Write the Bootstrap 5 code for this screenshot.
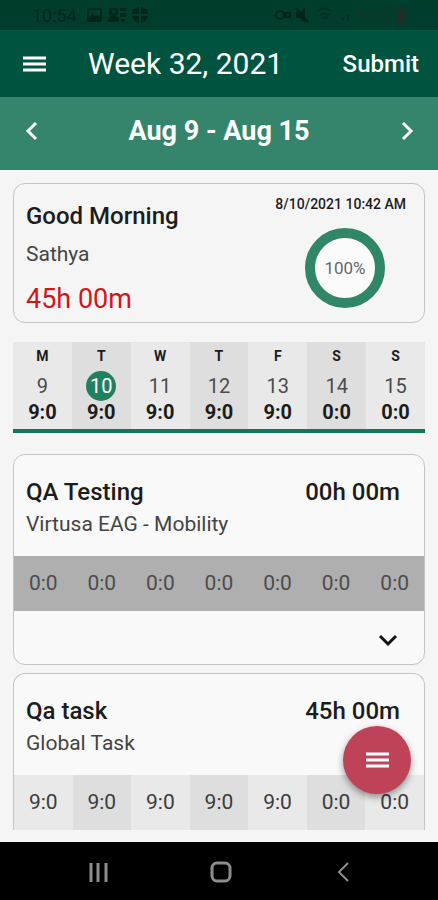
<!DOCTYPE html>
<html lang="en">
<head>
<meta charset="utf-8">
<meta name="viewport" content="width=device-width, initial-scale=1">
<title>Timesheet – Week 32, 2021</title>
<link href="https://cdn.jsdelivr.net/npm/bootstrap@5.3.0/dist/css/bootstrap.min.css" rel="stylesheet">
<style>
  body { font-family: Roboto, "Liberation Sans", sans-serif; background: #f5f5f5; color: #1c1c1c; }
  .status-bar { background: #003d2d; color: #00251b; height: 30px; padding: 0 32px; font-size: 18px; }
  .app-bar { background: #00543f; height: 67px; padding: 0 19px 0 23px; }
  .app-title { font-size: 30px; line-height: 34px; margin-left: 42px; }
  .submit-btn { font-size: 24px; line-height: 28px; font-weight: 500; }
  .week-bar { background: #35846c; height: 73px; padding: 0 24px 6px; }
  .week-label { font-size: 27px; line-height: 32px; font-weight: 700; }
  .content { padding: 13px 13px 0; }
  .panel { border: 1px solid #c4c4c4; border-radius: 12px; overflow: hidden; }
  .greeting { height: 140px; padding: 12px 18px 7px 12px; margin-bottom: 19px; }
  .heading { font-size: 24px; line-height: 28px; font-weight: 500; }
  .greeting .heading { line-height: 32px; }
  .detail { font-size: 21px; line-height: 28px; color: #444; }
  .total { font-size: 27px; line-height: 32px; color: #d4151b; }
  .stamp { font-size: 14px; line-height: 16px; font-weight: 500; }
  .ring { margin-right: 21px; }
  .days { table-layout: fixed; width: 100%; text-align: center; }
  .days th, .days td { padding: 0; background: #e9e9e9; }
  .days th:nth-child(even), .days td:nth-child(even) { background: #dedede; }
  .week-days { border-bottom: 4px solid #12775a; margin-bottom: 21px; }
  .week-days th { font-size: 14px; line-height: 28px; font-weight: 700; }
  .week-days .date { font-size: 20px; line-height: 32px; color: #4c4c4c; }
  .week-days .hours { font-size: 20px; line-height: 20px; font-weight: 700; padding-bottom: 7px; }
  .today { width: 30px; height: 30px; background: #23805f; }
  .task { background: #f9f9f9; margin-bottom: 8px; }
  .task-head { height: 101px; padding: 23px 24px 0 12px; }
  .task-hours td { font-size: 21px; line-height: 55px; color: #3c3c3c; }
  .task-hours.locked td { background: #afafaf; color: #4c4c4c; }
  .task-foot { height: 53px; padding: 4px 24px 0; }
  .task-open { border-bottom: 0; border-radius: 12px 12px 0 0; margin-bottom: 12px; }
  .fab { width: 68px; height: 68px; right: 27px; bottom: 106px; background: #be4258; box-shadow: 0 3px 7px rgba(0,0,0,.4); }
  .nav-keys { height: 58px; padding: 2px 80px 0 84px; }
</style>
<script src="https://cdn.jsdelivr.net/npm/bootstrap@5.3.0/dist/js/bootstrap.bundle.min.js"></script>
</head>
<body class="min-vh-100 d-flex flex-column">

<div class="status-bar d-flex align-items-center">
  <span>10:54</span>
  <svg class="ms-2" width="66" height="18" viewBox="0 0 66 18" aria-hidden="true">
    <path fill="currentColor" fill-rule="evenodd" d="M4 2h11a2 2 0 0 1 2 2v10a2 2 0 0 1-2 2H4a2 2 0 0 1-2-2V4a2 2 0 0 1 2-2zM4 4v8l4-5 3 4 2-2 2 3V4z"/>
    <path fill="currentColor" fill-rule="evenodd" d="M24 2h9v7h-3l4 3v4H23v-4l4-3h-3zM27 4v3h3V4zM35 2h6v3h-6zM35 7h6v4h-6zM36 13h4v3h-4z"/>
    <path fill="currentColor" d="M48 3q4 0 6-2v7h-7q0-3 1-5zM56 1q3 2 6 2l1 5h-7zM47 10h7v7q-6-2-7-7zM56 10h7q-1 5-7 7z"/>
  </svg>
  <svg class="ms-auto" width="132" height="18" viewBox="0 0 132 18" fill="none" stroke="currentColor" stroke-width="2" aria-hidden="true">
    <circle cx="6" cy="9" r="4"/><path d="M10 7h7M10 11h4M16 8v4"/><circle cx="14" cy="9" r="2"/>
    <path fill="currentColor" stroke="none" d="M22 6h4l5-5v16l-5-5h-4z"/><path d="M22 2l12 14"/>
    <g opacity=".6"><path d="M44 5q7-5 13 0M46 9q5-3 9 0M49 12q2-1 4 0"/><path d="M69 15v-3M74 15V9"/></g>
    <path stroke="#173229" opacity=".6" d="M85 4h6M85 4v5h6v5h-6M103 4h-6v5h6v5h-6M108 15l7-12"/><circle cx="109" cy="5" r="1" stroke="#173229" opacity=".6"/><circle cx="114" cy="13" r="1" stroke="#173229" opacity=".6"/>
    <path fill="#2c2a22" stroke="none" opacity=".7" d="M124 3h2V1h4v2h2v14h-8z"/>
  </svg>
</div>

<header class="app-bar d-flex align-items-center text-white">
  <button class="btn p-0 border-0 text-white d-flex" type="button" aria-label="Menu">
    <svg width="23" height="18" viewBox="0 0 23 18" fill="none" stroke="currentColor" stroke-width="3"><path d="M0 3h23M0 9h23M0 15h23"/></svg>
  </button>
  <h1 class="app-title mb-0 fw-normal">Week 32, 2021</h1>
  <button class="submit-btn btn p-0 border-0 text-white ms-auto" type="button">Submit</button>
</header>

<nav class="week-bar d-flex align-items-center justify-content-between text-white" aria-label="Week">
  <button class="btn p-0 border-0 text-white d-flex" type="button" aria-label="Previous week">
    <svg width="14" height="20" viewBox="0 0 14 20" fill="none" stroke="currentColor" stroke-width="3"><path d="M12 2L4 10l8 8"/></svg>
  </button>
  <h2 class="week-label mb-0">Aug 9 - Aug 15</h2>
  <button class="btn p-0 border-0 text-white d-flex" type="button" aria-label="Next week">
    <svg width="14" height="20" viewBox="0 0 14 20" fill="none" stroke="currentColor" stroke-width="3"><path d="M3 2l8 8-8 8"/></svg>
  </button>
</nav>

<main class="content flex-grow-1">
  <section class="panel greeting d-flex justify-content-between">
    <div class="d-flex flex-column">
      <h3 class="heading mb-0 mt-1">Good Morning</h3>
      <div class="detail mt-2">Sathya</div>
      <div class="total mt-auto">45h 00m</div>
    </div>
    <div class="d-flex flex-column align-items-end">
      <div class="stamp">8/10/2021 10:42 AM</div>
      <svg class="ring mt-3" width="80" height="80" viewBox="0 0 80 80" role="img" aria-label="100 percent complete">
        <circle cx="40" cy="40" r="35" fill="#fbfbfb" stroke="#2f8768" stroke-width="10"/>
        <text x="40" y="46" text-anchor="middle" font-size="17" fill="#666">100%</text>
      </svg>
    </div>
  </section>

  <table class="days week-days">
    <thead><tr><th>M</th><th>T</th><th>W</th><th>T</th><th>F</th><th>S</th><th>S</th></tr></thead>
    <tbody>
      <tr class="date"><td>9</td><td><span class="today mx-auto rounded-circle text-white d-flex align-items-center justify-content-center">10</span></td><td>11</td><td>12</td><td>13</td><td>14</td><td>15</td></tr>
      <tr><td class="hours">9:0</td><td class="hours">9:0</td><td class="hours">9:0</td><td class="hours">9:0</td><td class="hours">9:0</td><td class="hours">0:0</td><td class="hours">0:0</td></tr>
    </tbody>
  </table>

  <section class="panel task">
    <div class="task-head">
      <div class="d-flex justify-content-between heading"><h3 class="heading mb-0">QA Testing</h3><span>00h 00m</span></div>
      <div class="detail mt-1">Virtusa EAG - Mobility</div>
    </div>
    <table class="days task-hours locked">
      <tbody><tr><td>0:0</td><td>0:0</td><td>0:0</td><td>0:0</td><td>0:0</td><td>0:0</td><td>0:0</td></tr></tbody>
    </table>
    <div class="task-foot d-flex align-items-center justify-content-end">
      <button class="btn p-0 border-0 d-flex" type="button" aria-label="Expand task">
        <svg width="24" height="14" viewBox="0 0 24 14" fill="none" stroke="#111" stroke-width="3"><path d="M4 3l8 8 8-8"/></svg>
      </button>
    </div>
  </section>

  <section class="panel task task-open">
    <div class="task-head">
      <div class="d-flex justify-content-between heading"><h3 class="heading mb-0">Qa task</h3><span>45h 00m</span></div>
      <div class="detail mt-1">Global Task</div>
    </div>
    <table class="days task-hours">
      <tbody><tr><td>9:0</td><td>9:0</td><td>9:0</td><td>9:0</td><td>9:0</td><td>0:0</td><td>0:0</td></tr></tbody>
    </table>
  </section>
</main>

<button class="fab btn p-0 border-0 rounded-circle position-fixed d-flex align-items-center justify-content-center text-white" type="button" aria-label="Actions">
  <svg width="23" height="18" viewBox="0 0 23 18" fill="none" stroke="currentColor" stroke-width="3"><path d="M0 3h23M0 9h23M0 15h23"/></svg>
</button>

<footer class="nav-keys bg-black d-flex align-items-center justify-content-between">
  <button class="btn p-0 border-0 d-flex" type="button" aria-label="Recent apps">
    <svg width="28" height="24" viewBox="0 0 28 24" fill="none" stroke="#8d8d8d" stroke-width="3"><path d="M7 3v19M14 3v19M22 3v19"/></svg>
  </button>
  <button class="btn p-0 border-0 d-flex" type="button" aria-label="Home">
    <svg width="24" height="24" viewBox="0 0 24 24" fill="none" stroke="#8d8d8d" stroke-width="3"><rect x="3" y="3" width="18" height="18" rx="5"/></svg>
  </button>
  <button class="btn p-0 border-0 d-flex" type="button" aria-label="Back">
    <svg width="28" height="24" viewBox="0 0 28 24" fill="none" stroke="#8d8d8d" stroke-width="2"><path d="M18 3L9 12l9 9"/></svg>
  </button>
</footer>
</body>
</html>
